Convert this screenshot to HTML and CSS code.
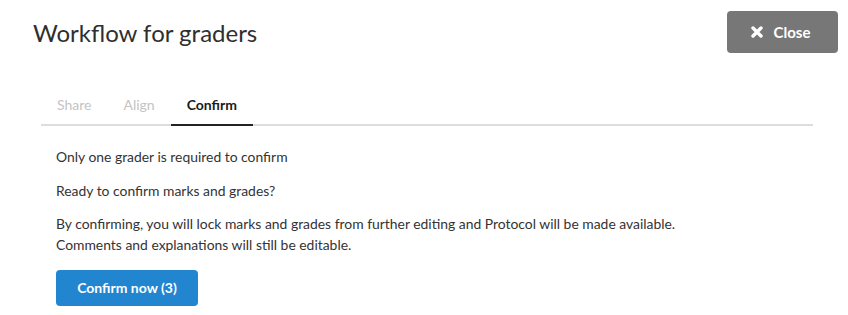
FILE: index.html
```html
<!DOCTYPE html>
<html>
<head>
<meta charset="utf-8">
<link rel="stylesheet" href="styles.css">
</head>
<body>
<div class="modal">
  <div class="header">
    <h1 class="title">Workflow for graders</h1>
    <button class="close-btn">
      <svg class="close-icon" viewBox="0 0 12 12" width="12" height="12"><path d="M2 2 L10 10 M10 2 L2 10" stroke="#fff" stroke-width="3.4" stroke-linecap="round"/></svg>
      <span>Close</span>
    </button>
  </div>
  <div class="tabs">
    <div class="tab">Share</div>
    <div class="tab">Align</div>
    <div class="tab active">Confirm</div>
  </div>
  <div class="content">
    <p>Only one grader is required to confirm</p>
    <p>Ready to confirm marks and grades?</p>
    <p>By confirming, you will lock marks and grades from further editing and Protocol will be made available.<br>Comments and explanations will still be editable.</p>
    <button class="confirm-btn">Confirm now (3)</button>
  </div>
</div>
</body>
</html>
```
FILE: styles.css
```css
* { box-sizing: border-box; }
body {
  margin: 0;
  background: #fff;
  font-family: Lato, "Open Sans", sans-serif;
  color: #333;
}
.modal {
  width: 848px;
}
.header {
  display: flex;
  justify-content: space-between;
  align-items: flex-start;
  padding: 11px 10px 0 33px;
}
.title {
  margin: 7px 0 0;
  font-size: 24px;
  font-weight: 400;
  color: #2f2f2f;
  line-height: 30px;
}
.close-btn {
  width: 111px;
  height: 42px;
  background: #777;
  border: none;
  border-radius: 4px;
  color: #fff;
  font-family: Lato, sans-serif;
  font-weight: 700;
  font-size: 15px;
  display: flex;
  align-items: center;
  justify-content: center;
  gap: 11px;
  padding: 0 4px 0 0;
}
.close-icon { display: block; }
.tabs {
  display: flex;
  margin: 42px 35px 0 41px;
  border-bottom: 2px solid #ddd;
}
.tab {
  padding: 0 16px;
  height: 29px;
  line-height: 20px;
  font-size: 14px;
  color: #c4c4c4;
}
.tab.active {
  color: #1a1a1a;
  font-weight: 700;
  border-bottom: 2px solid #222;
  margin-bottom: -2px;
  height: 31px;
}
.content {
  padding: 20px 0 0 56px;
  font-size: 13.9px;
  line-height: 21px;
}
.content p {
  margin: 0 0 12.5px;
}
.confirm-btn {
  margin-top: 2px;
  width: 142px;
  height: 36px;
  background: #2185d0;
  color: #fff;
  border: none;
  border-radius: 4px;
  font-family: Lato, sans-serif;
  font-weight: 700;
  font-size: 14px;
  padding: 0;
}
```
